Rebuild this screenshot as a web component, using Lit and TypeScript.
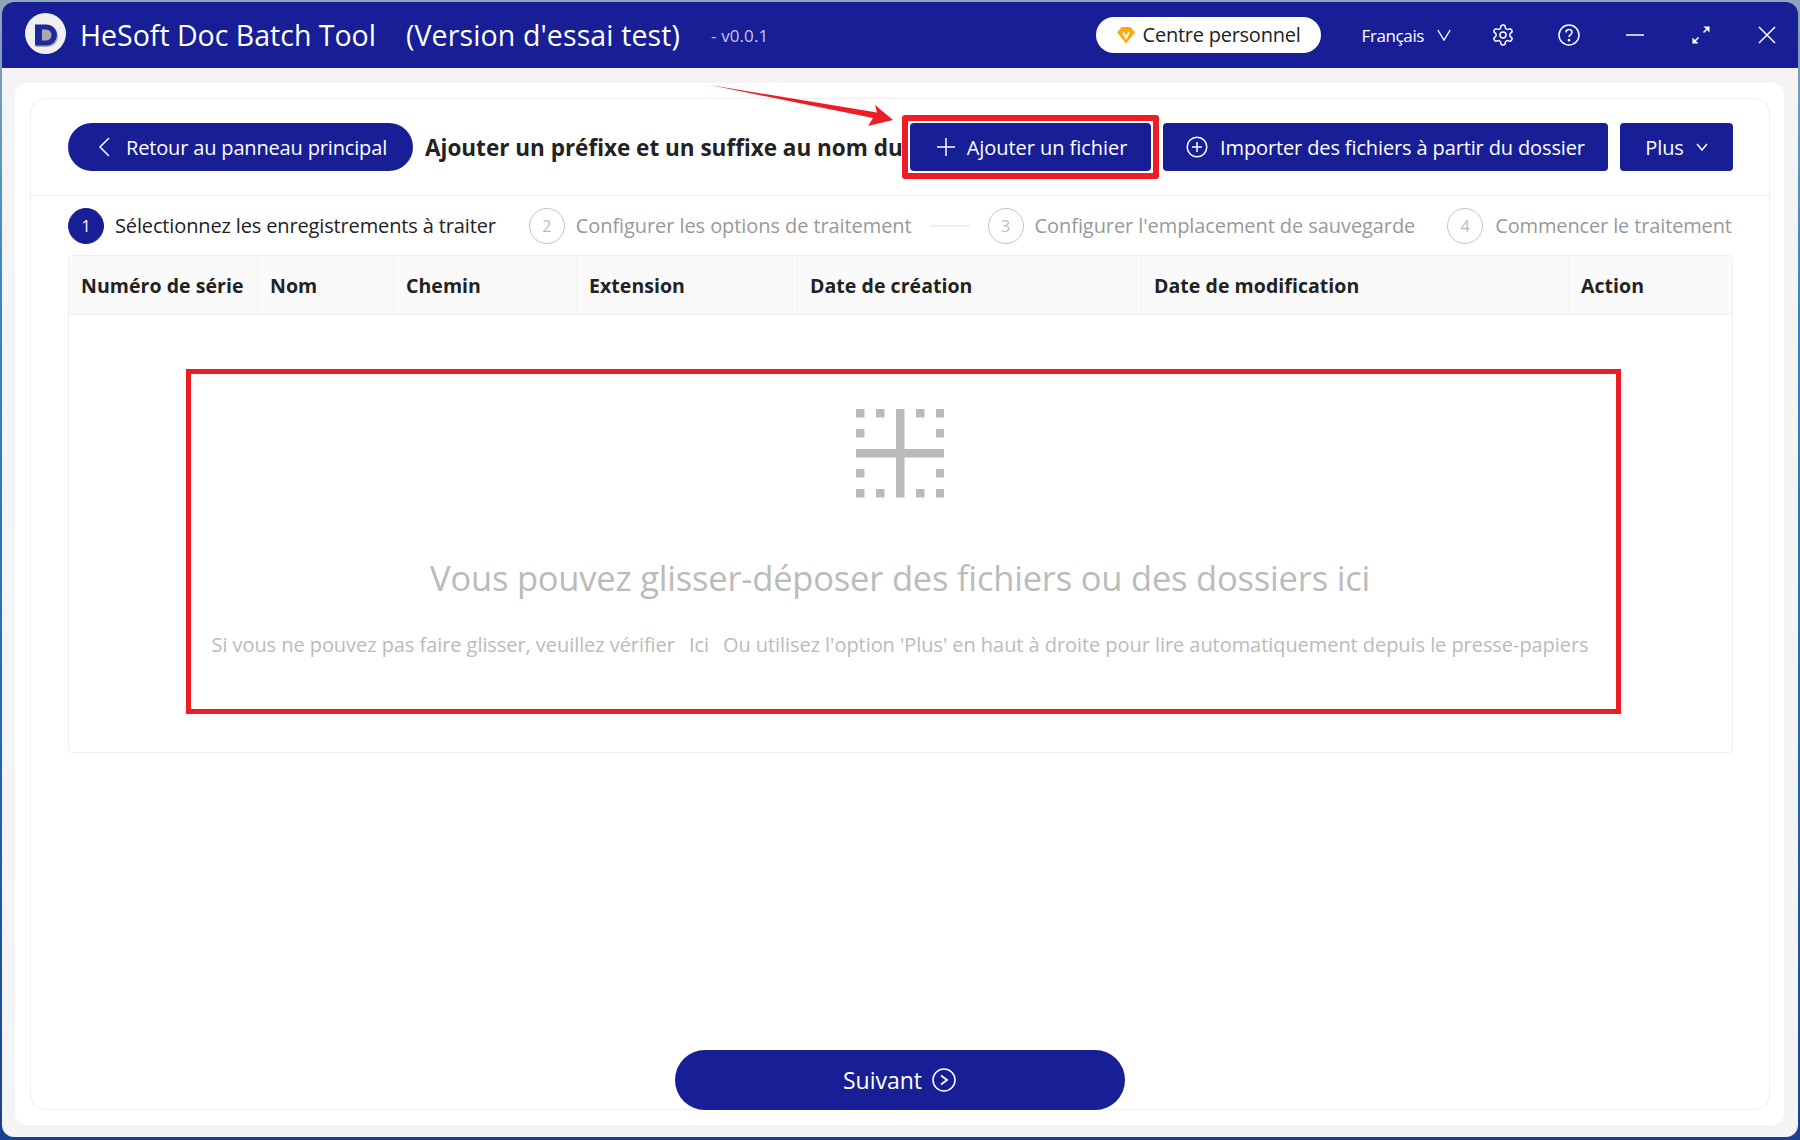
import { LitElement, html, css, svg } from "lit";
import { customElement } from "lit/decorators.js";

const gear = "M12.22 2h-.44a2 2 0 0 0-2 2v.18a2 2 0 0 1-1 1.73l-.43.25a2 2 0 0 1-2 0l-.15-.08a2 2 0 0 0-2.73.73l-.22.38a2 2 0 0 0 .73 2.73l.15.1a2 2 0 0 1 1 1.72v.51a2 2 0 0 1-1 1.74l-.15.09a2 2 0 0 0-.73 2.73l.22.38a2 2 0 0 0 2.73.73l.15-.08a2 2 0 0 1 2 0l.43.25a2 2 0 0 1 1 1.73V20a2 2 0 0 0 2 2h.44a2 2 0 0 0 2-2v-.18a2 2 0 0 1 1-1.73l.43-.25a2 2 0 0 1 2 0l.15.08a2 2 0 0 0 2.73-.73l.22-.39a2 2 0 0 0-.73-2.73l-.15-.08a2 2 0 0 1-1-1.74v-.5a2 2 0 0 1 1-1.74l.15-.09a2 2 0 0 0 .73-2.73l-.22-.38a2 2 0 0 0-2.73-.73l-.15.08a2 2 0 0 1-2 0l-.43-.25a2 2 0 0 1-1-1.73V4a2 2 0 0 0-2-2z";

const COLS = [
  { label: "Numéro de série", w: 189 },
  { label: "Nom", w: 136 },
  { label: "Chemin", w: 183 },
  { label: "Extension", w: 221 },
  { label: "Date de création", w: 344 },
  { label: "Date de modification", w: 427 },
  { label: "Action", w: 163 },
];

function dropIcon() {
  const pos = [0, 20, 60, 80];
  const squares: unknown[] = [];
  for (const x of pos) for (const y of pos) {
    const edge = x === 0 || x === 80 || y === 0 || y === 80;
    if (edge) squares.push(svg`<rect x=${x} y=${y} width="8.5" height="8.5"/>`);
  }
  return html`<svg class="drop-icon" viewBox="0 0 88.5 88.5" fill="#bbbbbb">
    ${squares}<rect x="40" y="0" width="8.5" height="88.5"/><rect x="0" y="40" width="88.5" height="8.5"/>
  </svg>`;
}

@customElement("app-root")
export class AppRoot extends LitElement {
  static styles = css`
    :host {
      display: block;
      width: 1800px;
      height: 1140px;
      padding: 2px 2px 3px 2px;
      box-sizing: border-box;
      position: relative;
      overflow: hidden;
      background: linear-gradient(180deg, #8fa6ba 0%, #3a86c2 25%, #1f62b4 70%, #1c3f90 100%);
      font-family: "Open Sans", "Noto Sans", sans-serif;
      color: #222;
    }
    .window {
      height: 100%;
      display: flex;
      flex-direction: column;
      border-radius: 12px;
      overflow: hidden;
      background: #f4f4f4;
    }
    .titlebar {
      flex: 0 0 66px;
      background: #171e96;
      color: #fff;
      display: flex;
      align-items: center;
      padding: 0 19px 0 23px;
    }
    .logo { width: 41px; height: 41px; margin: 0 14px 3px 0; flex: none; }
    .app-name { font-size: 28.5px; white-space: nowrap; }
    .app-edition { font-size: 28.5px; white-space: nowrap; margin-left: 30px; letter-spacing: 0.12px; }
    .version { font-size: 17px; color: #c5c7e6; margin-left: 31px; white-space: nowrap; letter-spacing: 0.1px; }
    .chip {
      margin-left: auto;
      width: 225px;
      height: 36px;
      box-sizing: border-box;
      background: #fff;
      color: #222;
      border-radius: 18px;
      display: flex;
      align-items: center;
      padding: 0 0 2px 21px;
      gap: 8px;
      font-size: 20px;
      letter-spacing: -0.25px;
    }
    .gem { width: 18px; height: 18px; flex: none; margin-top: 2px; }
    .lang {
      display: flex;
      align-items: center;
      margin-left: 41px;
      margin-right: 40px;
      gap: 13px;
      font-size: 17px;
      letter-spacing: -0.4px;
    }
    .win-icons { display: flex; align-items: center; gap: 42px; }
    .win-icon { width: 24px; height: 24px; display: block; fill: none; stroke: #fff; stroke-width: 1.5; }

    .body { flex: 1; min-height: 0; display: flex; padding: 15px 14px 12px 13px; }
    .panel { flex: 1; min-width: 0; background: #fff; border-radius: 12px; padding: 15px 14px 15px 15px; display: flex; }
    .card {
      flex: 1;
      min-width: 0;
      box-sizing: border-box;
      border: 1px solid #eeeeee;
      border-radius: 16px;
      display: flex;
      flex-direction: column;
      padding: 0 36px 0 37px;
    }
    .toolbar {
      flex: 0 0 97px;
      margin: 0 -36px 0 -37px;
      padding: 24px 36px 0 37px;
      box-sizing: border-box;
      border-bottom: 1px solid #eeeeee;
      display: flex;
      align-items: flex-start;
    }
    .btn {
      flex: none;
      height: 48px;
      box-sizing: border-box;
      background: #171e96;
      color: #fff;
      border: 0;
      display: flex;
      align-items: center;
      justify-content: center;
      font: inherit;
      font-size: 20px;
      letter-spacing: -0.13px;
      border-radius: 4px;
      white-space: nowrap;
    }
    .btn-back { width: 345px; border-radius: 24px; gap: 16px; padding-left: 10px; letter-spacing: -0.16px; }
    .doc-title {
      flex: 1;
      min-width: 0;
      overflow: hidden;
      white-space: nowrap;
      margin: 0 0 0 12px;
      height: 48px;
      line-height: 50px;
      font-size: 22.5px;
      font-weight: 700;
    }
    .btn-add { width: 241px; gap: 12px; padding-left: 9px; position: relative; letter-spacing: -0.05px; }
    .btn-add::after {
      content: "";
      position: absolute;
      inset: -8px -8px -8px -8px;
      border: 6px solid #ee1c25;
      border-radius: 3px;
      pointer-events: none;
    }
    .btn-import { width: 445px; gap: 12px; margin-left: 12px; }
    .btn-plus { width: 113px; gap: 12px; margin-left: 12px; }
    .btn svg { flex: none; fill: none; stroke: #fff; stroke-width: 1.5; }

    .steps { flex: 0 0 59px; display: flex; align-items: center; font-size: 20px; letter-spacing: -0.08px; white-space: nowrap; color: #999; box-sizing: border-box; }
    .step { display: flex; align-items: center; gap: 11px; }
    .step + .step { margin-left: 31px; }
    .step:last-child { margin-left: 32px; gap: 12px; letter-spacing: -0.14px; }
    .num {
      width: 36px;
      height: 36px;
      box-sizing: border-box;
      border-radius: 50%;
      border: 1px solid #c4c4c4;
      color: #bbb;
      display: flex;
      align-items: center;
      justify-content: center;
      font-size: 16px;
      flex: none;
    }
    .step.active { color: #222; letter-spacing: -0.14px; margin-right: 2px; }
    .step.active .num { background: #171e96; border-color: #171e96; color: #fff; }
    .step-line { width: 40px; height: 2px; background: #eeeeee; margin: 0 18px; flex: none; }
    .step-line + .step { margin-left: 0; }

    .table { height: 498px; box-sizing: border-box; border: 1px solid #eeeeee; border-radius: 4px; display: flex; flex-direction: column; }
    .thead { flex: 0 0 59px; display: flex; background: #fafafa; border-bottom: 1px solid #eeeeee; box-sizing: border-box; }
    .th { flex: none; box-sizing: border-box; display: flex; align-items: center; padding-left: 12px; font-weight: 700; font-size: 19.5px; letter-spacing: 0.05px; white-space: nowrap; border-right: 1px solid #f2f2f2; }
    .th:last-child { border-right: 0; flex: 1; }
    .tbody { flex: 1; display: flex; flex-direction: column; padding: 54px 111px 0 117px; }
    .drop {
      height: 345px;
      box-sizing: border-box;
      border: 5px solid #ee1c25;
      padding-right: 7px;
      display: flex;
      flex-direction: column;
      align-items: center;
      color: #bbbbbb;
      white-space: nowrap;
    }
    .drop-icon { width: 88.5px; height: 88.5px; margin-top: 35px; flex: none; }
    .drop-title { font-size: 34.5px; margin-top: 58px; line-height: 44px; letter-spacing: -0.2px; }
    .drop-hint { font-size: 20px; margin-top: 31px; line-height: 28px; letter-spacing: -0.06px; display: flex; gap: 14px; }

    .btn-next {
      align-self: center;
      margin: auto 2px -1px 0;
      width: 450px;
      height: 60px;
      border-radius: 30px;
      gap: 10px;
      font-size: 23px;
      letter-spacing: 0;
    }
    .arrow { position: absolute; left: 700px; top: 75px; width: 200px; height: 60px; pointer-events: none; }
  `;

  render() {
    return html`
      <div class="window">
        <header class="titlebar">
          <svg class="logo" viewBox="0 0 41 41">
            <circle cx="20.5" cy="20.5" r="20.5" fill="#f0f0f0"/>
            <path d="M11 13h11.500a10.500 10.500 0 0 1 0 21H11z" fill="#a9a9ae"/>
            <path fill-rule="evenodd" d="M10 11.500h11.500a10.500 10.500 0 0 1 0 21H10zM17 16.500v11h4a5.500 5.500 0 0 0 0-11z" fill="#1e2a9c"/>
          </svg>
          <span class="app-name">HeSoft Doc Batch Tool</span>
          <span class="app-edition">(Version d'essai test)</span>
          <span class="version">- v0.0.1</span>
          <div class="chip">
            <svg class="gem" viewBox="0 0 18 18">
              <path d="M4.500 1h9L18 6.500 9 17.500 0 6.500z" fill="#ffa912"/>
              <path d="M5 6.500h2.400L9 10l1.600-3.500H13l-4 7.500z" fill="#fff"/>
            </svg>
            <span>Centre personnel</span>
          </div>
          <div class="lang">
            <span>Français</span>
            <svg width="14" height="12" viewBox="0 0 14 12" fill="none" stroke="#fff" stroke-width="1.400"><path d="M.8 1l6.200 10L13.200 1"/></svg>
          </div>
          <div class="win-icons">
            <svg class="win-icon" viewBox="0 0 24 24" stroke-linejoin="round"><path d=${gear}/><circle cx="12" cy="12" r="3"/></svg>
            <svg class="win-icon" viewBox="0 0 24 24"><circle cx="12" cy="12" r="10"/><path d="M9 9.500a3 3 0 0 1 6 0c0 2-3 2.300-3 4.500"/><circle cx="12" cy="17.200" r=".6"/></svg>
            <svg class="win-icon" viewBox="0 0 24 24" stroke-width="2"><path d="M3 12h18"/></svg>
            <svg class="win-icon" viewBox="0 0 24 24"><path d="M4 20l5.500-5.500M14.500 9.500L20 4"/><path d="M3.500 14.500v6h6z" fill="#fff" stroke="none"/><path d="M14.500 3.500h6v6z" fill="#fff" stroke="none"/></svg>
            <svg class="win-icon" viewBox="0 0 24 24"><path d="M4 4l16 16M20 4L4 20"/></svg>
          </div>
        </header>
        <main class="body">
          <div class="panel">
            <div class="card">
              <div class="toolbar">
                <button class="btn btn-back">
                  <svg width="12" height="20" viewBox="0 0 12 20"><path d="M11 1L2 10l9 9"/></svg>
                  <span>Retour au panneau principal</span>
                </button>
                <h1 class="doc-title">Ajouter un préfixe et un suffixe au nom du</h1>
                <button class="btn btn-add">
                  <svg width="18" height="18" viewBox="0 0 18 18"><path d="M9 0v18M0 9h18"/></svg>
                  <span>Ajouter un fichier</span>
                </button>
                <button class="btn btn-import">
                  <svg width="22" height="22" viewBox="0 0 22 22"><circle cx="11" cy="11" r="9.800"/><path d="M11 6v10M6 11h10"/></svg>
                  <span>Importer des fichiers à partir du dossier</span>
                </button>
                <button class="btn btn-plus">
                  <span>Plus</span>
                  <svg width="12" height="8" viewBox="0 0 12 8"><path d="M1 1l5 6 5-6"/></svg>
                </button>
              </div>
              <div class="steps">
                <div class="step active"><span class="num">1</span><span>Sélectionnez les enregistrements à traiter</span></div>
                <div class="step"><span class="num">2</span><span>Configurer les options de traitement</span></div>
                <div class="step-line"></div>
                <div class="step"><span class="num">3</span><span>Configurer l'emplacement de sauvegarde</span></div>
                <div class="step"><span class="num">4</span><span>Commencer le traitement</span></div>
              </div>
              <div class="table">
                <div class="thead">
                  ${COLS.map((c) => html`<div class="th" style="width:${c.w}px">${c.label}</div>`)}
                </div>
                <div class="tbody">
                  <div class="drop">
                    ${dropIcon()}
                    <div class="drop-title">Vous pouvez glisser-déposer des fichiers ou des dossiers ici</div>
                    <div class="drop-hint">
                      <span>Si vous ne pouvez pas faire glisser, veuillez vérifier</span>
                      <span>Ici</span>
                      <span>Ou utilisez l'option 'Plus' en haut à droite pour lire automatiquement depuis le presse-papiers</span>
                    </div>
                  </div>
                </div>
              </div>
              <button class="btn btn-next">
                <span>Suivant</span>
                <svg width="24" height="24" viewBox="0 0 24 24"><circle cx="12" cy="12" r="11"/><path d="M9 7.500l6 4.500-6 4.500" stroke-width="1.800"/></svg>
              </button>
            </div>
          </div>
        </main>
      </div>
      <svg class="arrow" viewBox="0 0 200 60">
        <path d="M10 10L177 37.500 175 30 193 45 168 51 173 43z" fill="#ee1c25"/>
      </svg>
    `;
  }
}
